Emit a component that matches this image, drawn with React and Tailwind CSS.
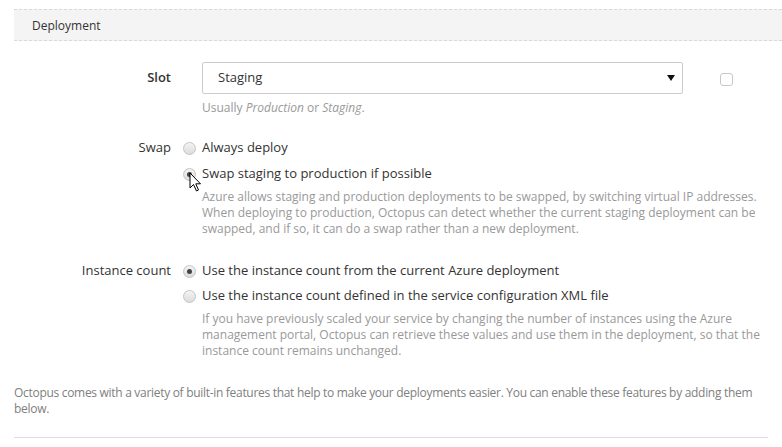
const Radio = ({ checked }) => (
  <span className="w-[13px] h-[13px] shrink-0 rounded-full border border-[#c4c4c4] bg-gradient-to-b from-[#f4f4f4] to-[#dcdcdc] flex items-center justify-center">
    {checked && <span className="w-[5px] h-[5px] rounded-full bg-[#444]" />}
  </span>
);

const RadioOption = ({ checked, label, children }) => (
  <div>
    <div className="flex items-center gap-[6px] h-[20px]">
      <Radio checked={checked} />
      <span className="text-[13px] text-[#333]">{label}</span>
    </div>
    {children && (
      <p className="pl-[19px] pt-[5px] text-[12px] leading-[16px] text-[#999]">{children}</p>
    )}
  </div>
);

const Cursor = () => (
  <svg className="absolute left-[189px] top-[172px]" width="13" height="20" viewBox="0 0 13 20">
    <path
      d="M1 1 L1 16 L4.5 12.5 L7.5 19 L9.5 18 L6.8 11.8 L11.5 11.8 Z"
      fill="#fff"
      stroke="#000"
      strokeWidth="1"
      strokeLinejoin="round"
    />
  </svg>
);

export default function App() {
  return (
    <div className="relative w-[782px] h-[447px] overflow-hidden bg-white pt-[9px] pl-[14px] font-['Open_Sans',sans-serif] text-[#333]">
      <div className="h-[32px] flex items-center pl-[18px] pt-[1px] bg-[#f4f4f4] border-y border-dashed border-[#d9d9d9] text-[12px]">
        Deployment
      </div>

      <div className="pt-[21px]">
        {/* Slot */}
        <div className="flex">
          <div className="w-[157px] h-[32px] flex items-center justify-end text-[13px] font-semibold">Slot</div>
          <div className="ml-[31px] w-[481px]">
            <div className="h-[32px] border border-[#ccc] rounded-[2px] flex items-center justify-between pl-[15px] pr-[7px] text-[13px]">
              <span>Staging</span>
              <svg width="8" height="6" viewBox="0 0 8 6"><path d="M0 0 H8 L4 6 Z" fill="#111" /></svg>
            </div>
            <p className="pt-[6px] text-[12px] leading-[16px] text-[#999]">
              Usually <i>Production</i> or <i>Staging</i>.
            </p>
          </div>
          <div className="ml-[37px] mt-[11px] w-[13px] h-[13px] rounded-[3px] border border-[#c8c8c8]" />
        </div>

        {/* Swap */}
        <div className="flex mt-[22px]">
          <div className="w-[157px] h-[20px] flex items-center justify-end text-[13px]">Swap</div>
          <div className="ml-[12px] flex flex-col gap-[6px]">
            <RadioOption label="Always deploy" />
            <RadioOption checked label="Swap staging to production if possible">
              Azure allows staging and production deployments to be swapped, by switching virtual IP addresses.
              <br />
              When deploying to production, Octopus can detect whether the current staging deployment can be
              <br />
              swapped, and if so, it can do a swap rather than a new deployment.
            </RadioOption>
          </div>
        </div>

        {/* Instance count */}
        <div className="flex mt-[24px]">
          <div className="w-[157px] h-[20px] flex items-center justify-end text-[13px]">Instance count</div>
          <div className="ml-[12px] flex flex-col gap-[5px]">
            <RadioOption checked label="Use the instance count from the current Azure deployment" />
            <RadioOption label="Use the instance count defined in the service configuration XML file">
              If you have previously scaled your service by changing the number of instances using the Azure
              <br />
              management portal, Octopus can retrieve these values and use them in the deployment, so that the
              <br />
              instance count remains unchanged.
            </RadioOption>
          </div>
        </div>
      </div>

      <p className="mt-[26px] text-[12px] leading-[16px] tracking-[-0.3px] text-[#808080]">
        <span className="whitespace-nowrap">
          Octopus comes with a variety of built-in features that help to make your deployments easier. You can enable these features by adding them
        </span>
        <br />
        below.
      </p>
      <div className="mt-[20px] mr-[14px] border-t border-[#ddd]" />

      <Cursor />
    </div>
  );
}
